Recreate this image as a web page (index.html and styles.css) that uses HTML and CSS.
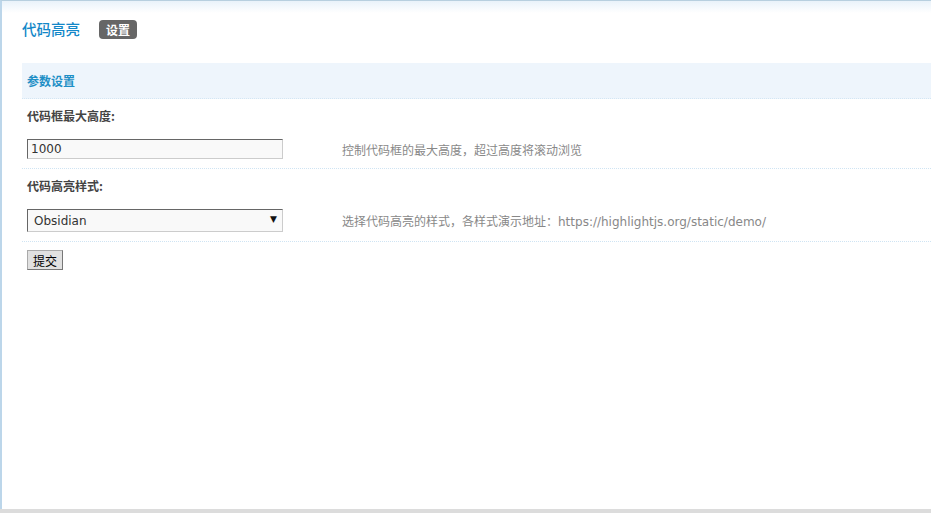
FILE: index.html
```html
<!DOCTYPE html>
<html lang="zh-CN">
<head>
    <meta charset="UTF-8">
    <title>代码高亮 - 设置</title>
    <link rel="stylesheet" href="styles.css">
</head>
<body>
    <div class="page">
        <div class="title-bar">
            <h2>代码高亮</h2>
            <span class="badge">设置</span>
        </div>
        <div class="section-head">参数设置</div>
        <form class="settings">
            <div class="field">
                <label class="field-label" for="maxHeight">代码框最大高度:</label>
                <div class="field-row">
                    <div class="field-control">
                        <input type="text" id="maxHeight" name="maxHeight" value="1000">
                    </div>
                    <p class="field-desc">控制代码框的最大高度，超过高度将滚动浏览</p>
                </div>
            </div>
            <div class="field">
                <label class="field-label" for="style">代码高亮样式:</label>
                <div class="field-row">
                    <div class="field-control">
                        <span class="select-wrap">
                            <select id="style" name="style">
                                <option>Obsidian</option>
                                <option>Default</option>
                                <option>Monokai</option>
                            </select>
                        </span>
                    </div>
                    <p class="field-desc">选择代码高亮的样式，各样式演示地址：https://highlightjs.org/static/demo/</p>
                </div>
            </div>
            <div class="actions">
                <button type="submit">提交</button>
            </div>
        </form>
    </div>
    <div class="bottom-bar"></div>
</body>
</html>
```

FILE: styles.css
```css
body {
    margin: 0;
    padding: 0;
    font-family: "DejaVu Sans", "Noto Sans CJK SC", sans-serif;
    font-size: 12px;
    color: #444;
    background: #fff;
}

.page {
    height: 509px;
    box-sizing: border-box;
    border-top: 1px solid #b7cfdf;
    border-left: 2px solid #bcd6ea;
    padding-left: 20px;
    background: linear-gradient(#e9f2fa, #fff 12px);
}

.bottom-bar {
    height: 4px;
    background: #dcdcdc;
}

.title-bar {
    display: flex;
    align-items: center;
    padding-top: 18px;
    height: 20px;
}

.title-bar h2 {
    margin: 0;
    font-family: "Noto Sans CJK SC", sans-serif;
    font-size: 14.5px;
    font-weight: 500;
    line-height: 20px;
    color: #1387c8;
}

.badge {
    margin-left: 19px;
    height: 19px;
    line-height: 19px;
    padding: 0 7px;
    border-radius: 4px;
    background: #666;
    color: #fff;
    font-family: "Noto Sans CJK SC", sans-serif;
    font-weight: bold;
    font-size: 12px;
}

.section-head {
    margin-top: 24px;
    height: 35px;
    line-height: 35px;
    padding-left: 5px;
    background: #eef5fc;
    border-bottom: 1px dotted #d3e6f4;
    font-family: "Noto Sans CJK SC", sans-serif;
    font-weight: bold;
    color: #1e8fc6;
}

.settings {
    margin: 0;
}

.field {
    border-bottom: 1px dotted #cfe4f3;
}

.field-label {
    display: block;
    padding: 7px 0 0 5px;
    height: 20px;
    line-height: 20px;
    font-family: "Noto Sans CJK SC", sans-serif;
    font-weight: bold;
    color: #444;
}

.field-row {
    display: flex;
    align-items: center;
    margin-top: 13px;
    padding-bottom: 9px;
}

.field-control {
    width: 315px;
    padding-left: 5px;
    flex-shrink: 0;
}

.field-desc {
    margin: 0;
    color: #888;
    white-space: nowrap;
}

input[type="text"] {
    box-sizing: border-box;
    width: 256px;
    height: 20px;
    margin: 0;
    padding: 0 3px;
    border: 1px solid;
    border-color: #666 #ccc #ccc #666;
    background: #f9f9f9;
    font-family: "DejaVu Sans", sans-serif;
    font-size: 12px;
    color: #333;
    display: block;
}

.select-wrap {
    position: relative;
    display: block;
    width: 256px;
}

.select-wrap::after {
    content: "\25BC";
    position: absolute;
    right: 6px;
    top: 5px;
    font-size: 9px;
    color: #111;
    pointer-events: none;
}

select {
    appearance: none;
    -webkit-appearance: none;
    box-sizing: border-box;
    width: 256px;
    height: 23px;
    margin: 0;
    padding: 0 6px;
    border: 1px solid;
    border-color: #666 #ccc #ccc #666;
    border-radius: 0;
    background: #f9f9f9;
    font-family: "DejaVu Sans", sans-serif;
    font-size: 12px;
    color: #333;
    display: block;
}

.actions {
    padding: 8px 0 0 5px;
}

button {
    height: 20px;
    padding: 0 5px;
    margin: 0;
    border: 1px solid #8a8a8a;
    border-color: #aaa #777 #777 #aaa;
    background: #e1e1e1;
    font-family: "Noto Sans CJK SC", sans-serif;
    font-size: 12px;
    line-height: 17px;
    color: #000;
    cursor: pointer;
}
```
